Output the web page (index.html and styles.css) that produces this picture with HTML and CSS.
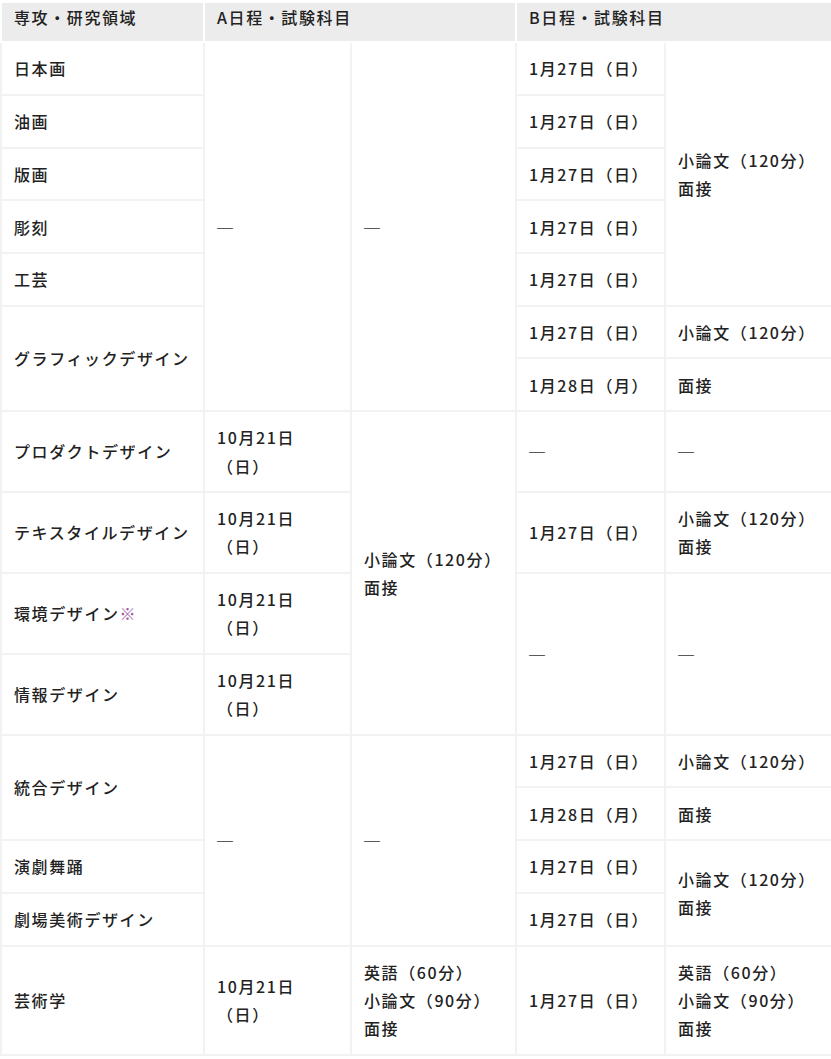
FILE: index.html
```html
<!DOCTYPE html>
<html lang="ja">
<head>
<meta charset="utf-8">
<title>試験日程</title>
<link rel="stylesheet" href="styles.css">
</head>
<body>
<table class="exam">
  <colgroup>
    <col class="c1"><col class="c2"><col class="c3"><col class="c4"><col class="c5">
  </colgroup>
  <thead>
    <tr>
      <th>専攻・研究領域</th>
      <th colspan="2">A日程・試験科目</th>
      <th colspan="2">B日程・試験科目</th>
    </tr>
  </thead>
  <tbody>
    <tr>
      <td>日本画</td>
      <td rowspan="7"><span class="dash">─</span></td>
      <td rowspan="7"><span class="dash">─</span></td>
      <td>1月27日（日）</td>
      <td rowspan="5">小論文（120分）<br>面接</td>
    </tr>
    <tr><td>油画</td><td>1月27日（日）</td></tr>
    <tr><td>版画</td><td>1月27日（日）</td></tr>
    <tr><td>彫刻</td><td>1月27日（日）</td></tr>
    <tr><td>工芸</td><td>1月27日（日）</td></tr>
    <tr>
      <td rowspan="2">グラフィックデザイン</td>
      <td>1月27日（日）</td>
      <td>小論文（120分）</td>
    </tr>
    <tr><td>1月28日（月）</td><td>面接</td></tr>
    <tr>
      <td>プロダクトデザイン</td>
      <td>10月21日（日）</td>
      <td rowspan="4">小論文（120分）<br>面接</td>
      <td><span class="dash">─</span></td>
      <td><span class="dash">─</span></td>
    </tr>
    <tr>
      <td>テキスタイルデザイン</td>
      <td>10月21日（日）</td>
      <td>1月27日（日）</td>
      <td>小論文（120分）<br>面接</td>
    </tr>
    <tr>
      <td>環境デザイン<span class="note">※</span></td>
      <td>10月21日（日）</td>
      <td rowspan="2"><span class="dash">─</span></td>
      <td rowspan="2"><span class="dash">─</span></td>
    </tr>
    <tr>
      <td>情報デザイン</td>
      <td>10月21日（日）</td>
    </tr>
    <tr>
      <td rowspan="2">統合デザイン</td>
      <td rowspan="4"><span class="dash">─</span></td>
      <td rowspan="4"><span class="dash">─</span></td>
      <td>1月27日（日）</td>
      <td>小論文（120分）</td>
    </tr>
    <tr><td>1月28日（月）</td><td>面接</td></tr>
    <tr>
      <td>演劇舞踊</td>
      <td>1月27日（日）</td>
      <td rowspan="2">小論文（120分）<br>面接</td>
    </tr>
    <tr><td>劇場美術デザイン</td><td>1月27日（日）</td></tr>
    <tr>
      <td>芸術学</td>
      <td>10月21日（日）</td>
      <td>英語（60分）<br>小論文（90分）<br>面接</td>
      <td>1月27日（日）</td>
      <td>英語（60分）<br>小論文（90分）<br>面接</td>
    </tr>
  </tbody>
</table>
</body>
</html>
```
FILE: styles.css
```css
html, body {
  margin: 0;
  padding: 0;
  background: #fff;
}

body {
  padding-top: 1px;
  font-family: "Noto Sans CJK JP", "Noto Sans", sans-serif;
  font-size: 16px;
  font-weight: 500;
  color: #222;
}

.exam {
  width: 831px;
  table-layout: fixed;
  border-collapse: collapse;
  letter-spacing: 0.1em;
  line-height: 28.2px;
}

.c1 { width: 203px; }
.c2 { width: 147px; }
.c3 { width: 165px; }
.c4 { width: 149px; }
.c5 { width: 167px; }

.exam th {
  background: #ececec;
  border: 2px solid #fff;
  font-weight: 500;
  text-align: left;
  vertical-align: top;
  padding: 0 12px 10px;
}

.exam td {
  border: 2px solid #f2f2f2;
  padding: 11.25px 12px;
  vertical-align: middle;
  text-align: left;
}

.dash {
  font-family: "Noto Sans CJK JP", sans-serif;
  color: #333;
}

.note {
  color: #a35aa6;
}
```
